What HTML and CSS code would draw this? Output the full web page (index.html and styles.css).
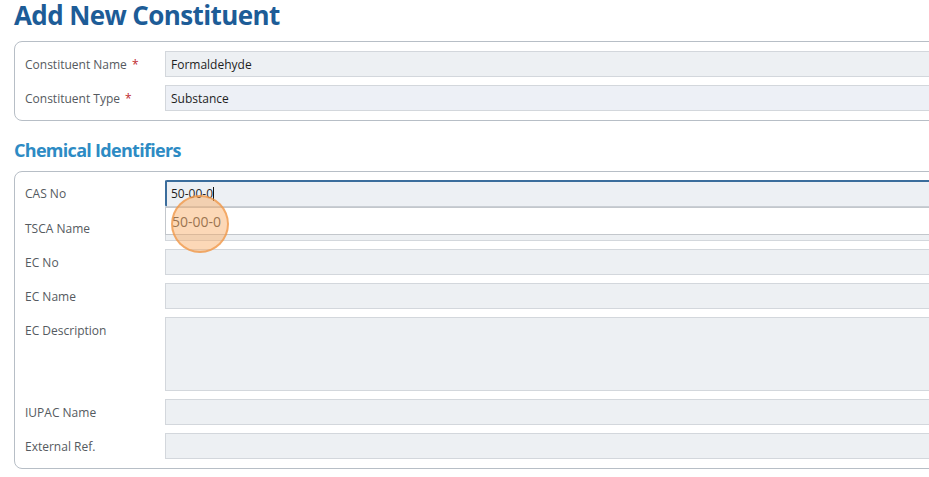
FILE: index.html
```html
<!DOCTYPE html>
<html>
<head>
<meta charset="utf-8">
<link rel="stylesheet" href="styles.css">
</head>
<body>
<div class="page">
  <h1 class="title">Add New Constituent</h1>
  <div class="box box-main">
    <div class="row">
      <label class="lbl">Constituent Name <span class="req">*</span></label>
      <div class="field">Formaldehyde</div>
    </div>
    <div class="row">
      <label class="lbl">Constituent Type <span class="req">*</span></label>
      <div class="field field-alt">Substance</div>
    </div>
  </div>
  <h2 class="subtitle">Chemical Identifiers</h2>
  <div class="box box-ids">
    <div class="row">
      <label class="lbl">CAS No</label>
      <div class="field focus">50-00-0<span class="caret"></span>
        <div class="dropdown"><span class="opt">50-00-0</span></div>
        <div class="click"></div>
      </div>
    </div>
    <div class="row">
      <label class="lbl">TSCA Name</label>
      <div class="field"></div>
    </div>
    <div class="row">
      <label class="lbl">EC No</label>
      <div class="field"></div>
    </div>
    <div class="row">
      <label class="lbl">EC Name</label>
      <div class="field"></div>
    </div>
    <div class="row row-top">
      <label class="lbl">EC Description</label>
      <div class="field area"></div>
    </div>
    <div class="row">
      <label class="lbl">IUPAC Name</label>
      <div class="field"></div>
    </div>
    <div class="row">
      <label class="lbl">External Ref.</label>
      <div class="field"></div>
    </div>
  </div>
</div>
</body>
</html>
```
FILE: styles.css
```css
html, body {
  margin: 0;
  padding: 0;
  background: #ffffff;
  overflow: hidden;
}
body {
  font-family: "Open Sans", "DejaVu Sans", sans-serif;
  width: 929px;
  height: 477px;
}
.page {
  padding: 0 0 0 14px;
  width: 1200px;
}
.title {
  margin: 0;
  height: 41px;
  line-height: 31px;
  font-size: 26px;
  font-weight: 700;
  color: #1d5c97;
  letter-spacing: -0.6px;
}
.subtitle {
  margin: 0;
  height: 50px;
  padding-top: 17px;
  box-sizing: border-box;
  line-height: 24px;
  font-size: 18px;
  font-weight: 700;
  color: #2d8bc4;
  letter-spacing: -0.7px;
}
.box {
  border: 1px solid #b7bec6;
  border-radius: 8px;
  padding: 9px 0 9px 10px;
  display: flex;
  flex-direction: column;
  gap: 8px;
}
.box-ids {
  padding-top: 8px;
}
.row {
  display: flex;
  align-items: center;
}
.row-top {
  align-items: flex-start;
}
.row-top .lbl {
  padding-top: 5px;
}
.lbl {
  width: 140px;
  flex: none;
  font-size: 12px;
  color: #555a60;
}
.req {
  color: #c0272d;
  margin-left: 2px;
}
.field {
  position: relative;
  flex: 1;
  height: 26px;
  box-sizing: border-box;
  border: 1px solid #d3d7dc;
  background: #edf0f3;
  font-size: 12px;
  color: #1e1e1e;
  line-height: 24px;
  padding: 1px 0 0 5px;
}
.field-alt {
  background: #edf0f6;
}
.field.area {
  height: 74px;
}
.field.focus {
  height: 27px;
  border-color: #3b6d9c;
  border-top-width: 2px;
  border-left-width: 2px;
  padding-left: 4px;
  padding-top: 0;
  background: #edf0f4;
  border-radius: 2px 0 0 2px;
  border-bottom-color: #c9ced4;
  border-right: none;
}
.caret {
  display: inline-block;
  width: 1px;
  height: 14px;
  background: #111;
  vertical-align: -3px;
}
.dropdown {
  position: absolute;
  left: -2px;
  right: 0;
  top: 25px;
  height: 28px;
  background: #ffffff;
  border: 1px solid #c3c7cc;
  box-sizing: border-box;
  z-index: 2;
}
.opt {
  position: absolute;
  left: 6px;
  top: 4px;
  font-size: 14px;
  line-height: 20px;
  color: #4e4a46;
}
.click {
  position: absolute;
  left: 4px;
  top: 13px;
  width: 58px;
  height: 58px;
  box-sizing: border-box;
  border-radius: 50%;
  background: rgba(248, 168, 96, 0.45);
  border: 2px solid rgba(240, 150, 70, 0.7);
  z-index: 3;
}
```
